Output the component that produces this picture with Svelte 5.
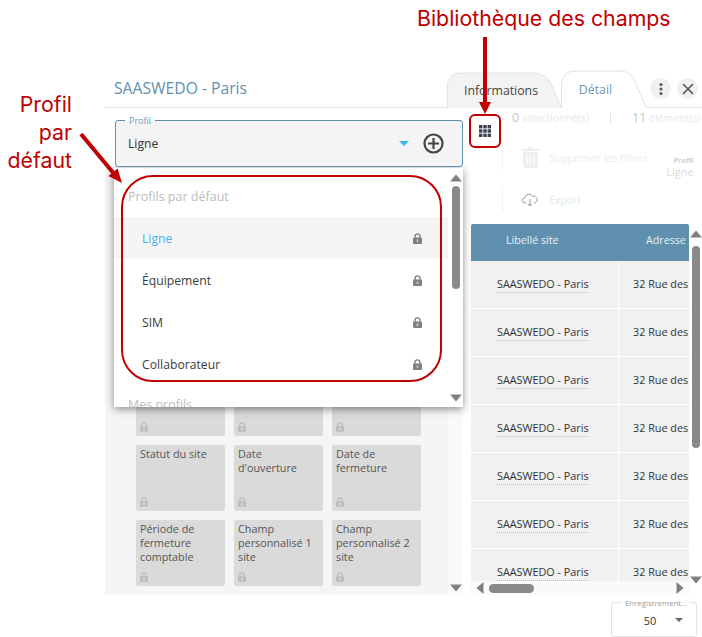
<script>
  const profils = [
    { name: "Ligne", active: true },
    { name: "Équipement" },
    { name: "SIM" },
    { name: "Collaborateur" },
  ];
  const cards = [
    "", "", "",
    "Statut du site", "Date d'ouverture", "Date de fermeture",
    "Période de fermeture comptable", "Champ personnalisé 1 site", "Champ personnalisé 2 site",
  ];
  const rows = [1, 2, 3, 4, 5, 6, 7];
</script>

{#snippet lock(color)}
  <svg class="lock" width="9" height="11" viewBox="0 0 10 12" fill={color}>
    <path d="M1.5 5V3.600a3.500 3.500 0 0 1 7 0V5h.5a1 1 0 0 1 1 1v5a1 1 0 0 1-1 1H1a1 1 0 0 1-1-1V6a1 1 0 0 1 1-1zM3 5h4V3.600a2 2 0 0 0-4 0z" />
    <rect x="4" y="7" width="2" height="3" fill="#fff" opacity="0.5" />
  </svg>
{/snippet}

{#snippet arrow(dir)}
  <svg class="arrow" width="12" height="12" viewBox="0 0 12 12" fill="#808080">
    {#if dir === "up"}<path d="M6 2.500l6 7H0z" />{/if}
    {#if dir === "down"}<path d="M0 2.500h12l-6 7z" />{/if}
    {#if dir === "left"}<path d="M9.500 0v12l-7-6z" />{/if}
    {#if dir === "right"}<path d="M2.500 0l7 6-7 6z" />{/if}
  </svg>
{/snippet}

<div class="page">
  <header class="top">
    <h1>SAASWEDO - Paris</h1>
    <nav class="tabs">
      <div class="tab">
        <svg class="tab-shape" width="122" height="37" viewBox="0 0 122 37" fill="#f3f3f3" stroke="#e2e2e2">
          <path d="M0.500 37V14a12 12 0 0 1 12-12h72c10 0 16 4 20 12l10 23" />
        </svg>
        <span>Informations</span>
      </div>
      <div class="tab current">
        <svg class="tab-shape" width="86" height="38" viewBox="0 0 86 38" fill="#fff" stroke="#e2e2e2">
          <path d="M0.500 38V14a13 13 0 0 1 13-13h44c10 0 14 4 17 12l11 25" />
        </svg>
        <span>Détail</span>
      </div>
    </nav>
    <div class="round-btns">
      <button class="round" aria-label="Menu">
        <svg width="4" height="12" viewBox="0 0 4 12" fill="#555"><circle cx="2" cy="1.500" r="1.500" /><circle cx="2" cy="6" r="1.500" /><circle cx="2" cy="10.500" r="1.500" /></svg>
      </button>
      <button class="round" aria-label="Fermer">
        <svg width="12" height="12" viewBox="0 0 12 12" stroke="#555" stroke-width="1.600" fill="none"><path d="M1 1l10 10M11 1L1 11" /></svg>
      </button>
    </div>
  </header>

  <main class="body">
    <section class="left">
      <div class="field">
        <span class="legend">Profil</span>
        <span class="value">Ligne</span>
        <span class="caret"></span>
        <svg class="plus" width="21" height="21" viewBox="0 0 21 21" fill="none" stroke="#444" stroke-width="2.200">
          <circle cx="10.500" cy="10.500" r="9" /><path d="M10.500 5v11M5 10.500h11" />
        </svg>
      </div>

      <div class="cards-wrap">
        <div class="cards">
          {#each cards as c}
            <div class="card">
              <span>{c}</span>
              {@render lock("#bdbdbd")}
            </div>
          {/each}
        </div>
        <div class="cards-scroll">{@render arrow("down")}</div>
      </div>

      <div class="menu">
        <div class="menu-list">
          <div class="group">Profils par défaut</div>
          {#each profils as p}
            <div class="item" class:active={p.active}>
              <span>{p.name}</span>
              {@render lock("#808080")}
            </div>
          {/each}
          <div class="group second">Mes profils</div>
        </div>
        <div class="menu-scroll">
          {@render arrow("up")}
          <div class="thumb"></div>
          {@render arrow("down")}
        </div>
      </div>
    </section>

    <section class="right">
      <div class="top-row">
        <button class="lib" aria-label="Bibliothèque des champs">
          <svg width="12" height="12" viewBox="0 0 12 12" fill="#3a4250">
            {#each [0, 4.3, 8.6] as y}
              {#each [0, 4.3, 8.6] as x}
                <rect {x} {y} width="3.400" height="3.400" />
              {/each}
            {/each}
          </svg>
        </button>
        <div class="counts">
          <span><b>0</b> sélectionné(s)</span>
          <i></i>
          <span><b>11</b> élément(s)</span>
        </div>
      </div>

      <div class="tools">
        <div class="tool">
          <svg width="18" height="21" viewBox="0 0 18 21" fill="#efefef">
            <path d="M7 0h5v2h6v2H1V2h6zM2 5h15v14a2 2 0 0 1-2 2H4a2 2 0 0 1-2-2zM5.500 8v10h1V8zM9 8v10h1V8zM12.500 8v10h1V8z" fill-rule="evenodd" />
          </svg>
          <span>Supprimer les filtres</span>
          <div class="profil-mini"><b>Profil</b><em>Ligne</em></div>
        </div>
        <div class="tool export">
          <svg width="18" height="14" viewBox="0 0 18 14" fill="none" stroke="#9c9c9c">
            <path d="M5 10H4.200A2.700 2.700 0 0 1 4 4.600 4 4 0 0 1 11.600 3.400 3.300 3.300 0 0 1 13.600 10H13M9 6v7M6.800 10.800L9 13l2.200-2.200" />
          </svg>
          <span>Export</span>
        </div>
      </div>

      <div class="grid-wrap">
        <div class="table">
          <div class="thead">
            <span class="c1">Libellé site</span>
            <span class="c2">Adresse</span>
          </div>
          {#each rows as r}
            <div class="row">
              <div class="c1"><u>SAASWEDO - Paris</u></div>
              <div class="c2">32 Rue des</div>
            </div>
          {/each}
        </div>
        <div class="v-scroll">
          {@render arrow("up")}
          <div class="thumb"></div>
          {@render arrow("down")}
        </div>
        <div class="h-scroll">
          {@render arrow("left")}
          <div class="h-thumb"></div>
          {@render arrow("right")}
        </div>
      </div>
    </section>
  </main>

  <footer class="foot">
    <div class="pager">
      <span class="pager-legend">Enregistrement...</span>
      <span class="pager-value">50</span>
      <span class="pager-caret"></span>
    </div>
  </footer>

  <!-- annotations par dessus la capture -->
  <div class="note note-lib">Bibliothèque des champs</div>
  <div class="note note-profil">Profil<br />par<br />défaut</div>
  <div class="ring"></div>
  <div class="lib-ring"></div>
  <svg class="marks" width="702" height="637" viewBox="0 0 702 637">
    <path d="M485 37v66" stroke="#c00000" stroke-width="4" />
    <path d="M479 102h12l-6 12z" fill="#c00000" />
    <path d="M81 134l34 41" stroke="#c00000" stroke-width="4" />
    <path d="M122 183l-13.600 -7 9.200 -7.600z" fill="#c00000" />
  </svg>
</div>

<style>
  :global(body) {
    margin: 0;
    background: #fff;
  }

  .page {
    position: relative;
    width: 702px;
    height: 637px;
    overflow: hidden;
    padding: 70px 0 0 105px;
    box-sizing: border-box;
    font-family: "Open Sans", sans-serif;
    font-size: 12px;
    color: #333;
  }

  .top {
    display: flex;
    height: 37px;
    align-items: flex-end;
    border-bottom: 1px solid #e2e2e2;
  }

  h1 {
    margin: 0 0 8px 9px;
    width: 333px;
    font-size: 15.700px;
    font-weight: 400;
    color: #5f90ae;
  }

  .tabs {
    display: flex;
    height: 38px;
    margin-bottom: -1px;
  }

  .tab {
    position: relative;
    width: 114px;
    display: flex;
    align-items: center;
    justify-content: center;
    padding: 3px 6px 0 0;
    box-sizing: border-box;
    font-size: 12.300px;
    color: #444;
  }

  .tab span {
    position: relative;
  }

  .tab-shape {
    position: absolute;
    left: 0;
    bottom: 0;
  }

  .tab.current {
    width: 86px;
    color: #6d9ab6;
    padding: 0 17px 0 0;
  }

  .round-btns {
    display: flex;
    gap: 6px;
    align-self: center;
    margin: 0 0 0 3px;
  }

  .round {
    width: 21px;
    height: 21px;
    flex: none;
    border: 0;
    padding: 0;
    border-radius: 50%;
    background: #f0f0f0;
    display: flex;
    align-items: center;
    justify-content: center;
  }

  .body {
    display: flex;
    height: 488px;
  }

  .left {
    position: relative;
    width: 358px;
    flex: none;
    padding-top: 12px;
    box-sizing: border-box;
  }

  .field {
    position: relative;
    margin-left: 10px;
    height: 47px;
    border: 1px solid #5f90ae;
    border-radius: 3px;
    background: #f4f4f4;
    display: flex;
    align-items: center;
    padding: 0 18px 0 12px;
    box-sizing: border-box;
    z-index: 3;
  }

  .legend {
    position: absolute;
    top: -6px;
    left: 9px;
    padding: 0 4px;
    font-size: 9px;
    line-height: 11px;
    color: #6d9ab6;
    background: linear-gradient(#fff 50%, #f4f4f4 50%);
  }

  .value {
    flex: 1;
    font-size: 12.200px;
  }

  .caret {
    border: 5px solid transparent;
    border-top-color: #3fb2f2;
    border-bottom: 0;
    margin-right: 14px;
  }

  .cards-wrap {
    display: flex;
    height: 428px;
    background: #f5f5f5;
    width: 358px;
  }

  .cards {
    width: 343px;
    flex: none;
    display: grid;
    grid-template-columns: repeat(3, 89px);
    grid-auto-rows: 66px;
    gap: 9px;
    padding: 203px 0 0 31px;
    box-sizing: border-box;
    align-content: start;
  }

  .card {
    display: flex;
    flex-direction: column;
    justify-content: space-between;
    padding: 2px 3px 4px 4px;
    box-sizing: border-box;
    background: #dadada;
    border-radius: 2px;
    font-size: 10.800px;
    line-height: 14px;
    color: #555;
    overflow: hidden;
  }

  .card .lock {
    width: 8px;
    height: 10px;
    flex: none;
  }

  .cards-scroll {
    width: 15px;
    display: flex;
    flex-direction: column;
    justify-content: flex-end;
    align-items: center;
    padding-bottom: 1px;
    box-sizing: border-box;
    background: #fafafa;
  }

  .menu {
    position: absolute;
    left: 9px;
    top: 60px;
    width: 349px;
    height: 239px;
    display: flex;
    background: #fff;
    box-shadow: 0 2px 8px rgba(0, 0, 0, 0.45);
    z-index: 2;
    overflow: hidden;
  }

  .menu-list {
    flex: 1;
    padding-top: 8px;
    min-width: 0;
  }

  .group {
    height: 41px;
    line-height: 41px;
    padding-left: 14px;
    font-size: 12.500px;
    color: #bcbcbc;
  }

  .group.second {
    height: 20px;
    line-height: 20px;
    margin-top: 10px;
  }

  .item {
    height: 42px;
    display: flex;
    align-items: center;
    justify-content: space-between;
    padding: 0 26px 0 28px;
    font-size: 12.200px;
    color: #3c3c3c;
  }

  .item.active {
    background: #f5f5f5;
    color: #3fb2f2;
  }

  .menu-scroll,
  .v-scroll {
    width: 15px;
    flex: none;
    display: flex;
    flex-direction: column;
    align-items: center;
    padding: 4px 0 3px;
    box-sizing: border-box;
  }

  .thumb {
    width: 8px;
    height: 103px;
    margin-top: 2px;
    margin-bottom: auto;
    border-radius: 4px;
    background: #8a8a8a;
  }

  .right {
    flex: 1;
    min-width: 0;
    padding-left: 8px;
    box-sizing: border-box;
  }

  .top-row {
    display: flex;
    height: 19px;
    white-space: nowrap;
  }

  .lib {
    flex: none;
    display: flex;
    align-items: center;
    justify-content: center;
    width: 28px;
    height: 33px;
    margin-top: 6px;
    padding: 0;
    border: 0;
    background: transparent;
  }

  .counts {
    display: flex;
    align-items: center;
    height: 19px;
    margin-left: 13px;
    font-size: 10.500px;
    color: #e8e8e8;
  }

  .counts b {
    font-weight: 400;
    font-size: 12.500px;
    color: #c4c4c4;
  }

  .counts i {
    width: 1px;
    height: 12px;
    margin: 0 21px;
    background: #e4e4e4;
  }

  .tools {
    height: 97px;
    padding: 18px 0 0 31px;
    box-sizing: border-box;
    white-space: nowrap;
    display: flex;
    flex-direction: column;
    gap: 17px;
  }

  .tool {
    display: flex;
    align-items: center;
    height: 25px;
    flex: none;
    gap: 10px;
    padding-left: 18px;
    border-left: 1px solid #f0f0f0;
    font-size: 10.500px;
    color: #ececec;
  }

  .tool svg {
    flex: none;
  }

  .tool.export {
    color: #dfe9ef;
  }

  .profil-mini {
    display: flex;
    flex-direction: column;
    align-items: flex-end;
    flex: none;
    width: 46px;
    margin: 17px 0 0 -10px;
    color: #dcdcdc;
    line-height: 12px;
  }

  .profil-mini b {
    font-size: 7.500px;
    color: #cfcfcf;
  }

  .profil-mini em {
    font-style: normal;
    font-size: 11px;
  }

  .grid-wrap {
    position: relative;
    width: 231px;
    height: 371px;
    overflow: hidden;
    display: flex;
  }

  .table {
    width: 218px;
    flex: none;
  }

  .thead {
    display: flex;
    height: 37px;
    align-items: center;
    padding-bottom: 5px;
    box-sizing: border-box;
    background: #5f90ae;
    color: #e9f1f5;
    font-size: 10.700px;
    border-radius: 2px 2px 0 0;
    white-space: nowrap;
  }

  .thead .c1 {
    width: 148px;
    flex: none;
    padding-left: 35px;
    box-sizing: border-box;
  }

  .thead .c2 {
    padding-left: 27px;
  }

  .row {
    display: flex;
    height: 48px;
    align-items: center;
    background: #f1f1f1;
    border-bottom: 1px solid #fff;
    box-sizing: border-box;
    font-size: 10.800px;
    color: #333;
    white-space: nowrap;
    overflow: hidden;
  }

  .row .c1 {
    width: 148px;
    flex: none;
    height: 100%;
    display: flex;
    align-items: center;
    padding: 0 0 2px 26px;
    box-sizing: border-box;
    border-right: 1px solid #fff;
  }

  .row .c2 {
    padding: 0 0 2px 14px;
  }

  u {
    text-decoration: underline dotted #a9bccb;
    text-underline-offset: 4px;
  }

  .v-scroll {
    width: 13px;
    padding-bottom: 9px;
  }

  .v-scroll .thumb {
    height: 202px;
    margin-top: 6px;
  }

  .h-scroll {
    position: absolute;
    left: 0;
    bottom: 0;
    width: 218px;
    height: 14px;
    display: flex;
    align-items: center;
    background: #fafafa;
    padding: 0 3px;
    box-sizing: border-box;
  }

  .h-thumb {
    width: 45px;
    height: 9px;
    border-radius: 5px;
    background: #8a8a8a;
    margin: 0 auto 0 3px;
  }

  .foot {
    display: flex;
    justify-content: flex-end;
    padding: 6px 5px 0 0;
  }

  .pager {
    position: relative;
    width: 86px;
    height: 35px;
    border: 1px solid #e4e4e4;
    border-radius: 3px;
    box-sizing: border-box;
    display: flex;
    align-items: center;
    justify-content: center;
    font-size: 11px;
  }

  .pager-legend {
    position: absolute;
    top: -5px;
    left: 10px;
    padding: 0 3px;
    background: #fff;
    font-size: 7.800px;
    line-height: 10px;
    color: #999;
    white-space: nowrap;
  }

  .pager-value {
    margin: 1px 8px 0 0;
  }

  .pager-caret {
    border: 4px solid transparent;
    border-top-color: #666;
    border-bottom: 0;
    position: absolute;
    right: 13px;
    top: 15px;
  }

  .note {
    position: absolute;
    font-family: Inter, sans-serif;
    font-size: 21.300px;
    line-height: 28px;
    color: #c00000;
    white-space: nowrap;
  }

  .note-lib {
    left: 417px;
    top: 4px;
  }

  .note-profil {
    right: 630px;
    top: 90px;
    text-align: right;
  }

  .ring {
    position: absolute;
    left: 121px;
    top: 175px;
    width: 321px;
    height: 207px;
    box-sizing: border-box;
    border: 2px solid #c00000;
    border-radius: 32px;
    z-index: 5;
  }

  .lib-ring {
    position: absolute;
    left: 469px;
    top: 114px;
    width: 32px;
    height: 34px;
    box-sizing: border-box;
    border: 2px solid #c00000;
    border-radius: 6px;
    z-index: 5;
  }

  .marks {
    position: absolute;
    left: 0;
    top: 0;
    pointer-events: none;
    z-index: 5;
  }
</style>
